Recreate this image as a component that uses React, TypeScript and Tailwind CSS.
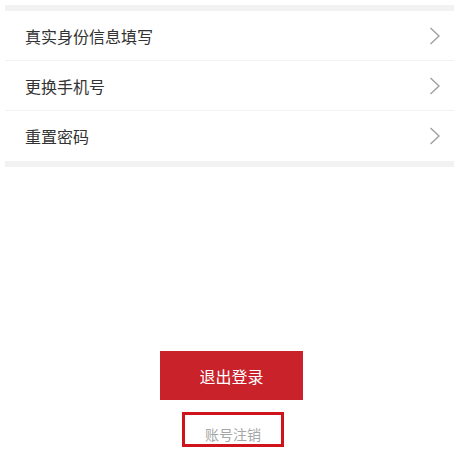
const rows = ["真实身份信息填写", "更换手机号", "重置密码"];

function Chevron() {
  return (
    <svg width="12" height="18" viewBox="0 0 12 18" fill="none" className="text-[#a0a0a0]">
      <polyline points="1.5,1 10,9 1.5,17" stroke="currentColor" strokeWidth="1.4" />
    </svg>
  );
}

export default function App() {
  return (
    <div
      className="w-[454px] h-[450px] bg-white overflow-hidden"
      style={{ fontFamily: '"Noto Sans CJK SC", "Noto Sans", sans-serif' }}
    >
      <div className="pt-[5px] pl-[5px]">
        <div className="h-[6px] bg-[#f2f2f2]" />
        {rows.map((label, i) => (
          <div
            key={label}
            className={
              "flex items-center justify-between h-[50px] pl-[20px] pr-[13px] " +
              (i < rows.length - 1 ? "border-b border-[#f2f2f2]" : "")
            }
          >
            <span className="text-[16px] text-[#333333] leading-none">{label}</span>
            <Chevron />
          </div>
        ))}
        <div className="h-[6px] bg-[#f2f2f2]" />
      </div>

      <div className="flex flex-col items-center pl-[9px] mt-[184px]">
        <button className="w-[143px] h-[49px] bg-[#c9222b] text-white text-[16px] leading-none">
          退出登录
        </button>
        <div className="mt-[12px] ml-[3px] w-[102px] h-[35px] border-[3px] border-[#d0121b] flex items-end justify-center">
          <span className="text-[14px] text-[#a6a6a6] leading-none mb-[3px]">账号注销</span>
        </div>
      </div>
    </div>
  );
}
